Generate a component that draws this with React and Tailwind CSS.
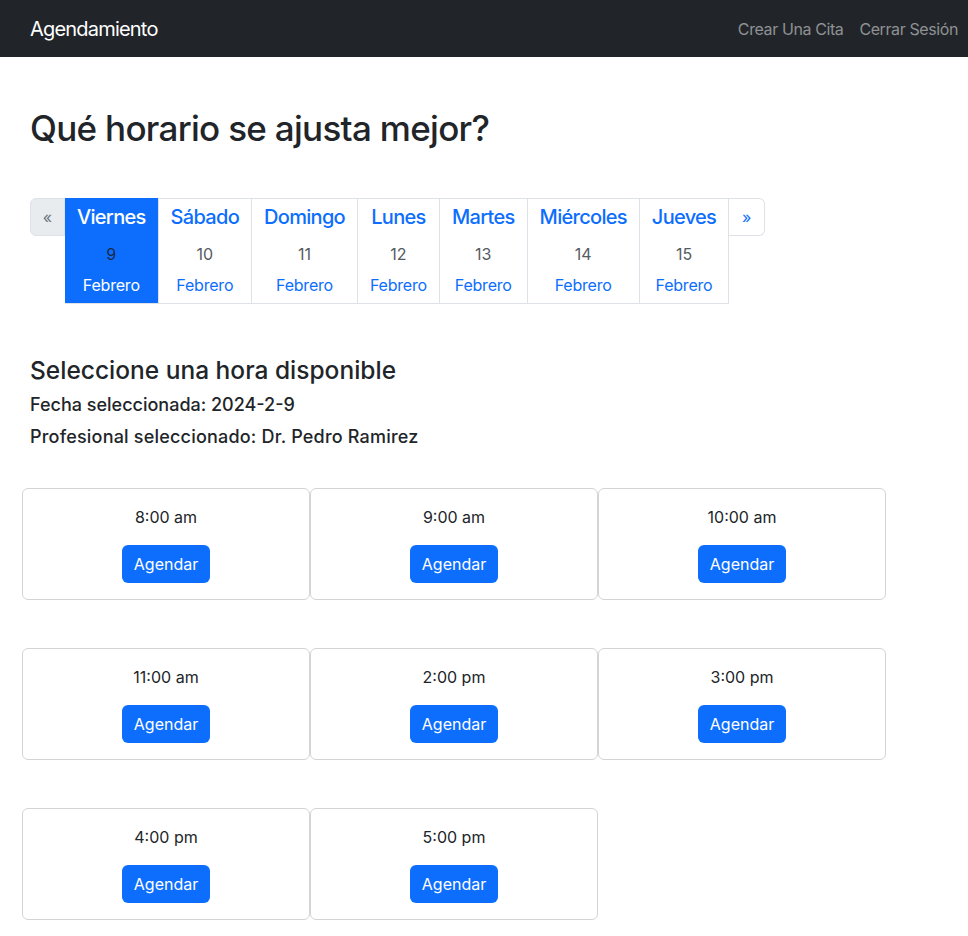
import { useState } from "react";

const days = [
  { name: "Viernes", num: 9 },
  { name: "Sábado", num: 10 },
  { name: "Domingo", num: 11 },
  { name: "Lunes", num: 12 },
  { name: "Martes", num: 13 },
  { name: "Miércoles", num: 14 },
  { name: "Jueves", num: 15 },
];

const slots = ["8:00 am", "9:00 am", "10:00 am", "11:00 am", "2:00 pm", "3:00 pm", "4:00 pm", "5:00 pm"];

export default function App() {
  const [selected, setSelected] = useState(0);

  return (
    <div className="min-h-screen bg-white text-[#212529]" style={{ fontFamily: "Inter, 'Noto Sans', sans-serif" }}>
      <nav className="h-[57px] bg-[#212529] flex items-center justify-between pl-[30px] pr-[10px]">
        <span className="text-white text-[20px] tracking-[-0.8px]">Agendamiento</span>
        <div className="flex gap-4 text-[16px] text-[#8f9194] tracking-[-0.4px]">
          <a href="#">Crear Una Cita</a>
          <a href="#">Cerrar Sesión</a>
        </div>
      </nav>

      <div className="px-[30px]">
        <h1 className="mt-[50px] text-[35px] font-medium leading-[1.2] tracking-[-0.7px]">Qué horario se ajusta mejor?</h1>

        <div className="mt-[49px] flex items-start">
          <button className="h-[38px] w-[35px] bg-[#e9ecef] text-[#6c757d] border border-[#dee2e6] rounded-l-md text-[16px]">«</button>
          {days.map((d, i) => {
            const active = i === selected;
            return (
              <div
                key={d.name}
                onClick={() => setSelected(i)}
                className={
                  "flex flex-col items-center px-3 border-b border-r border-[#dee2e6] cursor-pointer " +
                  (active ? "bg-[#0d6efd] border-[#0d6efd] text-white" : "border-t text-[#0d6efd]")
                }
              >
                <div className={"h-[38px] flex items-center text-[20px] font-medium tracking-[-0.7px] " + (active ? "" : "-mt-px")}>{d.name}</div>
                <div className={"h-[36px] flex items-center text-[16px] " + (active ? "text-[#1b2a4a]" : "text-[#555b61]")}>{d.num}</div>
                <div className="h-[31px] pt-[1px] text-[16px] leading-[24px] tracking-[-0.2px]">Febrero</div>
              </div>
            );
          })}
          <button className="h-[38px] w-[36px] text-[#0d6efd] border border-l-0 border-[#dee2e6] rounded-r-md text-[16px]">»</button>
        </div>

        <h4 className="mt-[52px] text-[24.5px] font-medium leading-[1.2]">Seleccione una hora disponible</h4>
        <h5 className="mt-[4px] text-[18px] font-medium leading-[32px]">Fecha seleccionada: 2024-2-9</h5>
        <h5 className="text-[18px] font-medium leading-[32px] tracking-[0.2px]">Profesional seleccionado: Dr. Pedro Ramirez</h5>
      </div>

      <div className="mt-[35px] pl-[22px] grid grid-cols-[288px_288px_288px] gap-y-[48px]">
        {slots.map((s) => (
          <div key={s} className="h-[112px] border border-[#d4d4d4] rounded-md flex flex-col items-center pt-[17px]">
            <div className="text-[16px] leading-[22px]">{s}</div>
            <button className="mt-[17px] h-[38px] w-[88px] bg-[#0d6efd] text-white rounded-md text-[16px]">Agendar</button>
          </div>
        ))}
      </div>
    </div>
  );
}
